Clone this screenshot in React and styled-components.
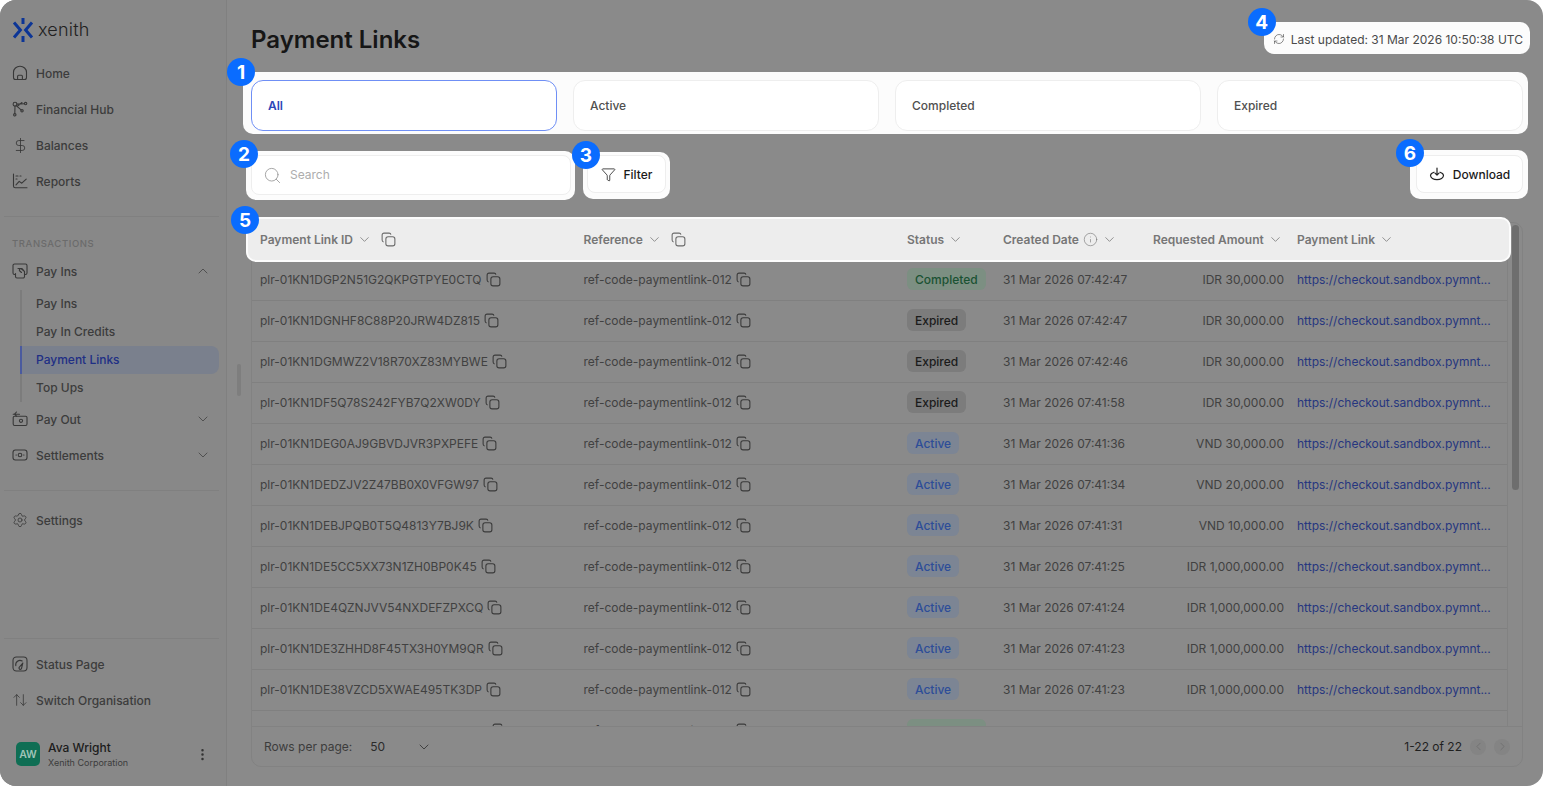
import React from "react";
import styled, { createGlobalStyle } from "styled-components";
import {
  RefreshCw,
  ChevronDown,
  ChevronUp,
  ChevronLeft,
  ChevronRight,
  DollarSign,
  Settings,
  ArrowUpDown,
  Search,
  Funnel,
  EllipsisVertical,
  Info,
} from "lucide-react";

const GlobalStyle = createGlobalStyle`
  html, body {
    margin: 0;
    background: #ffffff;
    font-family: "Inter", "Liberation Sans", sans-serif;
    overflow: hidden;
  }
  * { box-sizing: border-box; }
`;

const rows = [
  ["plr-01KN1DGP2N51G2QKPGTPYE0CTQ", "Completed", "31 Mar 2026 07:42:47", "IDR 30,000.00"],
  ["plr-01KN1DGNHF8C88P20JRW4DZ815", "Expired", "31 Mar 2026 07:42:47", "IDR 30,000.00"],
  ["plr-01KN1DGMWZ2V18R70XZ83MYBWE", "Expired", "31 Mar 2026 07:42:46", "IDR 30,000.00"],
  ["plr-01KN1DF5Q78S242FYB7Q2XW0DY", "Expired", "31 Mar 2026 07:41:58", "IDR 30,000.00"],
  ["plr-01KN1DEG0AJ9GBVDJVR3PXPEFE", "Active", "31 Mar 2026 07:41:36", "VND 30,000.00"],
  ["plr-01KN1DEDZJV2Z47BB0X0VFGW97", "Active", "31 Mar 2026 07:41:34", "VND 20,000.00"],
  ["plr-01KN1DEBJPQB0T5Q4813Y7BJ9K", "Active", "31 Mar 2026 07:41:31", "VND 10,000.00"],
  ["plr-01KN1DE5CC5XX73N1ZH0BP0K45", "Active", "31 Mar 2026 07:41:25", "IDR 1,000,000.00"],
  ["plr-01KN1DE4QZNJVV54NXDEFZPXCQ", "Active", "31 Mar 2026 07:41:24", "IDR 1,000,000.00"],
  ["plr-01KN1DE3ZHHD8F45TX3H0YM9QR", "Active", "31 Mar 2026 07:41:23", "IDR 1,000,000.00"],
  ["plr-01KN1DE38VZCD5XWAE495TK3DP", "Active", "31 Mar 2026 07:41:23", "IDR 1,000,000.00"],
  ["plr-01KN1DCX4V8RM20TQ6HPNW7ZKB", "Completed", "31 Mar 2026 07:40:12", "IDR 30,000.00"],
];

const HomeIcon = () => (
  <NavSvg viewBox="0 0 16 16">
    <path d="M1.5 12.5V7.2C1.5 4 4.4 1.2 8 1.2s6.5 2.8 6.5 6V12.5a2 2 0 0 1-2 2h-9a2 2 0 0 1-2-2Z" />
    <path d="M5.6 14.5v-3.2a1 1 0 0 1 1-1h2.8a1 1 0 0 1 1 1v3.2" />
  </NavSvg>
);

const HubIcon = () => (
  <NavSvg viewBox="0 0 16 16">
    <circle cx="3" cy="3.2" r="1.9" />
    <circle cx="13.6" cy="2.6" r="1.2" />
    <circle cx="2.8" cy="13.8" r="1.2" />
    <circle cx="10" cy="9.8" r="1.2" />
    <path d="M4.9 3.1l7.5-.4M4.2 4.7L9.1 8.9M3 5.1l-.2 7.5M5 5.5l5-4" />
  </NavSvg>
);

const ReportsIcon = () => (
  <NavSvg viewBox="0 0 16 16">
    <path d="M1.5 1v12a1.8 1.8 0 0 0 1.8 1.8H15" />
    <path d="M4 11.8l3.2-3.4 2.6 1.8 4.4-4" />
    <path d="M4 3h2M4 6h1M8 3h1" />
  </NavSvg>
);

const PayInIcon = () => (
  <NavSvg viewBox="0 0 16 16">
    <path d="M3.5 11.5H2.6A1.6 1.6 0 0 1 1 9.9V2.6A1.6 1.6 0 0 1 2.6 1h10.8A1.6 1.6 0 0 1 15 2.6v7.3a1.6 1.6 0 0 1-1.6 1.6h-.9" />
    <path d="M3.5 10.5v3a1.5 1.5 0 0 0 1.5 1.5h6a1.5 1.5 0 0 0 1.5-1.5v-5L9.5 5.5" />
    <path d="M6 5.5h3.5L11 7M9.5 9.5L7.8 8a1.3 1.3 0 1 1 1.7-2" />
  </NavSvg>
);

const PayOutIcon = () => (
  <NavSvg viewBox="0 0 16 16">
    <rect x="1.2" y="5.2" width="13.8" height="9.3" rx="1.4" />
    <circle cx="9" cy="9.8" r="1.6" />
    <path d="M1.2 3.2h6.3M4.5 1l-2 2.2 2 2" />
  </NavSvg>
);

const SettlementIcon = () => (
  <NavSvg viewBox="0 0 16 16">
    <rect x="1" y="3" width="14" height="10" rx="2.4" />
    <circle cx="8" cy="8" r="1.8" />
    <path d="M4 8h.4M11.6 8h.4" />
  </NavSvg>
);

const StatusIcon = () => (
  <NavSvg viewBox="0 0 16 16">
    <rect x="1" y="1" width="14" height="14" rx="3.4" />
    <path d="M3.8 9.6a4.3 4.3 0 0 1 6.4-4.6" />
    <path d="M7.2 11.4l3.6-4.4-1.2 5a1.3 1.3 0 1 1-2.4-.6Z" />
  </NavSvg>
);

const LogoMark = () => (
  <LogoSvg viewBox="0 0 22 26">
    <path d="M11 1v6M11 19v6" />
    <path d="M2 5.5L8.4 13 2 20.5M20 5.5L13.6 13 20 20.5" />
  </LogoSvg>
);

const CopyIcon = ({ $muted }) => (
  <CopySvg $muted={$muted} viewBox="0 0 16 16">
    <path d="M2.8 10.6A2 2 0 0 1 1.2 8.6V3.2a2 2 0 0 1 2-2h5.4a2 2 0 0 1 2 1.6" />
    <rect x="5.2" y="5" width="9.6" height="9.8" rx="2.4" />
  </CopySvg>
);

const DownloadIcon = () => (
  <ToolSvg viewBox="0 0 16 16">
    <path d="M8 2v7M6 7.2l2 2 2-2" />
    <path d="M5 6.2C3 6.8 1.5 8 1.5 9.6c0 2.2 2.9 4 6.5 4s6.5-1.8 6.5-4c0-1.6-1.5-2.8-3.5-3.4" />
  </ToolSvg>
);

const mainNav = [
  { label: "Home", icon: <HomeIcon /> },
  { label: "Financial Hub", icon: <HubIcon /> },
  { label: "Balances", icon: <DollarSign size={17} strokeWidth={1.2} /> },
  { label: "Reports", icon: <ReportsIcon /> },
];

const subNav = ["Pay Ins", "Pay In Credits", "Payment Links", "Top Ups"];

const NavRow = ({ icon, label, chevron }) => (
  <NavItem>
    <NavGlyph>{icon}</NavGlyph>
    <span>{label}</span>
    {chevron && <NavChevron>{chevron}</NavChevron>}
  </NavItem>
);

const Sidebar = () => (
  <Side>
    <Logo>
      <LogoMark />
      <LogoText>xenith</LogoText>
    </Logo>
    {mainNav.map((item) => (
      <NavRow key={item.label} {...item} />
    ))}
    <Divider />
    <SectionLabel>TRANSACTIONS</SectionLabel>
    <NavRow icon={<PayInIcon />} label="Pay Ins" chevron={<ChevronUp size={16} strokeWidth={1.25} />} />
    <SubList>
      {subNav.map((label) => (
        <SubItem key={label} $active={label === "Payment Links"}>
          {label}
        </SubItem>
      ))}
    </SubList>
    <NavRow icon={<PayOutIcon />} label="Pay Out" chevron={<ChevronDown size={16} strokeWidth={1.25} />} />
    <NavRow icon={<SettlementIcon />} label="Settlements" chevron={<ChevronDown size={16} strokeWidth={1.25} />} />
    <Divider />
    <SettingsGap />
    <NavRow icon={<Settings size={16} strokeWidth={1.2} />} label="Settings" />
    <Grow />
    <Divider />
    <BottomGap />
    <NavRow icon={<StatusIcon />} label="Status Page" />
    <NavRow icon={<ArrowUpDown size={16} strokeWidth={1.2} />} label="Switch Organisation" />
    <UserRow>
      <Avatar>AW</Avatar>
      <UserText>
        <UserName>Ava Wright</UserName>
        <UserOrg>Xenith Corporation</UserOrg>
      </UserText>
      <UserMenu>
        <EllipsisVertical size={15} strokeWidth={2} />
      </UserMenu>
    </UserRow>
  </Side>
);

const headers = [
  { label: "Payment Link ID", copy: true },
  { label: "Reference", copy: true },
  { label: "Status" },
  { label: "Created Date", info: true },
  { label: "Requested Amount" },
  { label: "Payment Link" },
];

const Table = () => (
  <Card>
    <TableArea>
      <HeaderRow>
        <Badge $x={-17} $y={-13}>5</Badge>
        {headers.map((h) => (
          <HeaderCell key={h.label}>
            {h.label}
            {h.info && <Info size={15} strokeWidth={1} />}
            <ChevronDown size={15} strokeWidth={1.25} />
            {h.copy && <HeaderCopy><CopyIcon $muted /></HeaderCopy>}
          </HeaderCell>
        ))}
      </HeaderRow>
      <Body>
        {rows.map(([id, status, date, amount]) => (
          <Row key={id}>
            <Cell>
              {id}
              <CopyIcon />
            </Cell>
            <Cell>
              ref-code-paymentlink-012
              <CopyIcon />
            </Cell>
            <Cell>
              <Pill $status={status}>{status}</Pill>
            </Cell>
            <Cell>{date}</Cell>
            <AmountCell>{amount}</AmountCell>
            <Cell>
              <LinkText>https://checkout.sandbox.pymnt...</LinkText>
            </Cell>
          </Row>
        ))}
      </Body>
      <Pager>
        <RowsLabel>Rows per page:</RowsLabel>
        <RowsValue>50</RowsValue>
        <ChevronDown size={16} strokeWidth={1.25} color="#333" />
        <PagerCount>1-22 of 22</PagerCount>
        <PagerButton><ChevronLeft size={13} strokeWidth={1.25} /></PagerButton>
        <PagerButton><ChevronRight size={13} strokeWidth={1.25} /></PagerButton>
      </Pager>
    </TableArea>
    <ScrollTrack>
      <ScrollThumb />
    </ScrollTrack>
  </Card>
);

export default function App() {
  return (
    <>
      <GlobalStyle />
      <Screen>
        <Sidebar />
        <ResizeHandle />
        <Main>
          <TopBar>
            <Title>Payment Links</Title>
            <Spot $t={9} $r={7} $b={5} $l={9} $flat>
              <Badge $x={-16} $y={-14}>4</Badge>
              <Updated>
                <RefreshCw size={12} strokeWidth={1.25} />
                Last updated: 31 Mar 2026 10:50:38 UTC
              </Updated>
            </Spot>
          </TopBar>
          <Spot $t={8} $r={5} $b={3} $l={8}>
            <Badge $x={-16} $y={-14}>1</Badge>
            <Tabs>
              <Tab $active>All</Tab>
              <Tab>Active</Tab>
              <Tab>Completed</Tab>
              <Tab>Expired</Tab>
            </Tabs>
          </Spot>
          <Toolbar>
            <Spot $t={4} $r={4} $b={5} $l={5}>
              <Badge $x={-16} $y={-11}>2</Badge>
              <SearchBox>
                <Search size={19} strokeWidth={1.1} color="#9a9a9a" />
                <SearchInput placeholder="Search" />
              </SearchBox>
            </Spot>
            <Spot $t={3} $r={4} $b={4} $l={4}>
              <Badge $x={-11} $y={-11}>3</Badge>
              <ToolButton $width={79}>
                <Funnel size={15} strokeWidth={1.25} />
                Filter
              </ToolButton>
            </Spot>
            <Grow />
            <Spot $t={5} $r={5} $b={4} $l={6}>
              <Badge $x={-14} $y={-11}>6</Badge>
              <ToolButton $width={107}>
                <DownloadIcon />
                Download
              </ToolButton>
            </Spot>
          </Toolbar>
          <Table />
        </Main>
      </Screen>
    </>
  );
}

const pillColors = {
  Completed: { bg: "#7c8f82", fg: "#1a5232" },
  Expired: { bg: "#7c7c7c", fg: "#1b1b1b" },
  Active: { bg: "#7c8594", fg: "#2d4d98" },
};

const Screen = styled.div`
  position: relative;
  display: flex;
  width: 1543px;
  height: 786px;
  border-radius: 16px;
  overflow: hidden;
  background: #8a8a8a;
`;

const Side = styled.aside`
  flex: 0 0 227px;
  display: flex;
  flex-direction: column;
  padding: 0 7px 0 4px;
  background: #888888;
  border-right: 1px solid #808080;
`;

const Logo = styled.div`
  display: flex;
  align-items: center;
  gap: 4px;
  height: 56px;
  padding: 4px 0 0 8px;
`;

const LogoSvg = styled.svg`
  width: 22px;
  height: 26px;
  fill: none;
  stroke: #0c3596;
  stroke-width: 3;
`;

const LogoText = styled.span`
  font-size: 18px;
  font-weight: 300;
  letter-spacing: 0.2px;
  color: #222222;
  margin-top: -2px;
`;

const NavSvg = styled.svg`
  width: 16px;
  height: 16px;
  fill: none;
  stroke: currentColor;
  stroke-width: 1.1;
  stroke-linecap: round;
  stroke-linejoin: round;
`;

const NavItem = styled.div`
  display: flex;
  align-items: center;
  height: 36px;
  flex: 0 0 36px;
  padding: 0 0 2px 8px;
  font-size: 12px;
  font-weight: 500;
  color: #3c3c3c;
`;

const NavGlyph = styled.span`
  display: flex;
  width: 24px;
  color: #383838;
`;

const NavChevron = styled.span`
  display: flex;
  margin-left: auto;
  margin-right: 8px;
  color: #444444;
`;

const Divider = styled.div`
  flex: 0 0 1px;
  margin-top: 16px;
  background: #808080;
`;

const SectionLabel = styled.div`
  height: 20px;
  margin-top: 17px;
  padding-left: 8px;
  line-height: 20px;
  font-size: 9.5px;
  font-weight: 500;
  letter-spacing: 0.6px;
  color: #6b6b6b;
`;

const SubList = styled.div`
  margin-left: 16px;
  border-left: 2px solid #7c7c7c;
`;

const SubItem = styled.div`
  display: flex;
  align-items: center;
  height: 28px;
  margin-left: -2px;
  padding: 0 0 2px 14px;
  font-size: 12px;
  font-weight: 500;
  color: ${({ $active }) => ($active ? "#1f2f85" : "#3c3c3c")};
  background: ${({ $active }) => ($active ? "#7a808d" : "transparent")};
  border-left: 2px solid ${({ $active }) => ($active ? "#4a5a9f" : "transparent")};
  border-radius: ${({ $active }) => ($active ? "0 8px 8px 0" : "0")};
`;

const SettingsGap = styled.div`
  flex: 0 0 12px;
`;

const BottomGap = styled.div`
  flex: 0 0 8px;
`;

const Grow = styled.div`
  flex: 1;
`;

const UserRow = styled.div`
  display: flex;
  align-items: center;
  height: 67px;
  flex: 0 0 67px;
  padding: 3px 9px 0 12px;
`;

const Avatar = styled.div`
  display: flex;
  align-items: center;
  justify-content: center;
  width: 24px;
  height: 24px;
  border-radius: 5px;
  background: #0f6e54;
  color: #9fc4b8;
  font-size: 10.5px;
  font-weight: 600;
`;

const UserText = styled.div`
  display: flex;
  flex-direction: column;
  margin-left: 8px;
`;

const UserName = styled.div`
  font-size: 12px;
  font-weight: 500;
  line-height: 16px;
  color: #1c1c1c;
`;

const UserOrg = styled.div`
  font-size: 9px;
  line-height: 13px;
  color: #3c3c3c;
`;

const UserMenu = styled.div`
  display: flex;
  margin-left: auto;
  color: #333333;
`;

const ResizeHandle = styled.div`
  position: absolute;
  left: 237px;
  top: 364px;
  width: 4px;
  height: 32px;
  border-radius: 2px;
  background: #7e7e7e;
`;

const Main = styled.main`
  flex: 1;
  min-width: 0;
  display: flex;
  flex-direction: column;
  padding: 0 20px 0 24px;
`;

const TopBar = styled.header`
  display: flex;
  justify-content: space-between;
  align-items: flex-start;
  height: 80px;
`;

const Title = styled.h1`
  margin: 24px 0 0;
  font-size: 24px;
  line-height: 32px;
  font-weight: 600;
  color: #161616;
`;

const Spot = styled.div`
  position: relative;
  background: #fcfcfc;
  border-radius: 10px;
  padding: ${({ $t, $r, $b, $l }) => `${$t}px ${$r}px ${$b}px ${$l}px`};
  margin: ${({ $t, $r, $b, $l, $flat }) =>
    $flat ? `22px -${$r}px 0 0` : `-${$t}px -${$r}px -${$b}px -${$l}px`};
`;

const Badge = styled.div`
  position: absolute;
  left: ${({ $x }) => $x}px;
  top: ${({ $y }) => $y}px;
  z-index: 3;
  display: flex;
  align-items: center;
  justify-content: center;
  width: 28px;
  height: 28px;
  border-radius: 50%;
  background: #0a6cff;
  color: #ffffff;
  font-size: 19px;
  font-weight: 700;
`;

const Updated = styled.div`
  display: flex;
  align-items: center;
  gap: 6px;
  height: 18px;
  padding-bottom: 2px;
  font-size: 12px;
  color: #4a4a4a;
  white-space: nowrap;
`;

const Tabs = styled.div`
  display: grid;
  grid-template-columns: repeat(4, 1fr);
  gap: 16px;
`;

const Tab = styled.div`
  display: flex;
  align-items: center;
  height: 51px;
  padding-left: 16px;
  border: 1px solid ${({ $active }) => ($active ? "#6f8ff5" : "#eeeeee")};
  border-radius: 12px;
  background: #ffffff;
  font-size: 12px;
  font-weight: ${({ $active }) => ($active ? 600 : 500)};
  color: ${({ $active }) => ($active ? "#2b46b8" : "#505050")};
`;

const Toolbar = styled.div`
  display: flex;
  align-items: flex-start;
  gap: 16px;
  margin-top: 24px;
`;

const SearchBox = styled.div`
  display: flex;
  align-items: center;
  gap: 8px;
  width: 320px;
  height: 40px;
  padding-left: 11px;
  border: 1px solid #eeeeee;
  border-radius: 8px;
  background: #ffffff;
`;

const SearchInput = styled.input`
  flex: 1;
  min-width: 0;
  padding: 0 0 2px;
  border: none;
  outline: none;
  background: transparent;
  font-family: inherit;
  font-size: 12px;
  &::placeholder {
    color: #adadad;
  }
`;

const ToolButton = styled.div`
  display: flex;
  align-items: center;
  justify-content: center;
  gap: 8px;
  width: ${({ $width }) => $width}px;
  height: 38px;
  margin-bottom: 2px;
  border: 1px solid #eeeeee;
  border-radius: 8px;
  background: #ffffff;
  font-size: 12px;
  font-weight: 500;
  color: #1a1a1a;
`;

const ToolSvg = styled.svg`
  width: 16px;
  height: 16px;
  fill: none;
  stroke: #222222;
  stroke-width: 1.2;
  stroke-linecap: round;
  stroke-linejoin: round;
`;

const Card = styled.section`
  display: flex;
  height: 545px;
  margin-top: 27px;
  border: 1px solid #828282;
  border-radius: 10px;
`;

const TableArea = styled.div`
  flex: 0 0 1255px;
  display: flex;
  flex-direction: column;
  min-width: 0;
`;

const columns = "323.5px 323.5px 96px 150px 144px 218px";

const HeaderRow = styled.div`
  position: relative;
  z-index: 2;
  display: grid;
  grid-template-columns: ${columns};
  flex: 0 0 45px;
  margin: -6px -4px 0 -6px;
  padding: 0 2px 0 4px;
  border: 2px solid #fcfcfc;
  border-radius: 10px;
  background: #ededed;
`;

const HeaderCell = styled.div`
  display: flex;
  align-items: center;
  gap: 4px;
  padding-left: 8px;
  font-size: 12px;
  font-weight: 600;
  color: #767676;
  white-space: nowrap;
`;

const HeaderCopy = styled.span`
  display: flex;
  margin-left: 5px;
`;

const CopySvg = styled.svg`
  flex: 0 0 15px;
  width: 15px;
  height: 15px;
  margin-left: 4px;
  fill: none;
  stroke: ${({ $muted }) => ($muted ? "#6a6a6a" : "#3a3a3a")};
  stroke-width: 1.15;
  ${HeaderCopy} & {
    margin-left: 0;
  }
`;

const Body = styled.div`
  flex: 1;
  min-height: 0;
  margin-top: -2px;
  overflow: hidden;
`;

const Row = styled.div`
  display: grid;
  grid-template-columns: ${columns};
  height: 41px;
  border-bottom: 1px solid #808080;
`;

const Cell = styled.div`
  display: flex;
  align-items: center;
  padding: 0 0 2px 8px;
  font-size: 12px;
  color: #414141;
  white-space: nowrap;
`;

const AmountCell = styled(Cell)`
  justify-content: flex-end;
  padding-right: 5px;
`;

const Pill = styled.span`
  display: inline-flex;
  align-items: center;
  height: 22px;
  padding: 0 8px;
  border-radius: 6px;
  font-weight: 500;
  background: ${({ $status }) => pillColors[$status].bg};
  color: ${({ $status }) => pillColors[$status].fg};
`;

const LinkText = styled.span`
  color: #26367f;
`;

const Pager = styled.footer`
  display: flex;
  align-items: center;
  flex: 0 0 40px;
  width: 1270px;
  padding: 0 12px;
  border-top: 1px solid #828282;
  font-size: 12px;
  color: #3c3c3c;
  background: #8a8a8a;
  position: relative;
  z-index: 1;
  border-radius: 0 0 10px 10px;
`;

const RowsLabel = styled.span`
  margin-right: 18px;
`;

const RowsValue = styled.span`
  width: 46px;
  color: #2b2b2b;
`;

const PagerCount = styled.span`
  margin-left: auto;
  margin-right: 8px;
  color: #1f1f1f;
`;

const PagerButton = styled.span`
  display: flex;
  align-items: center;
  justify-content: center;
  width: 16px;
  height: 16px;
  margin-right: 8px;
  border-radius: 50%;
  background: #848484;
  color: #6a6a6a;
  &:last-child {
    margin-right: 0;
  }
`;

const ScrollTrack = styled.div`
  flex: 1;
  margin-bottom: 40px;
  padding: 2px 3px 0 4px;
  border-left: 1px solid #828282;
`;

const ScrollThumb = styled.div`
  height: 265px;
  border-radius: 4px;
  background: #6e6e6e;
`;
